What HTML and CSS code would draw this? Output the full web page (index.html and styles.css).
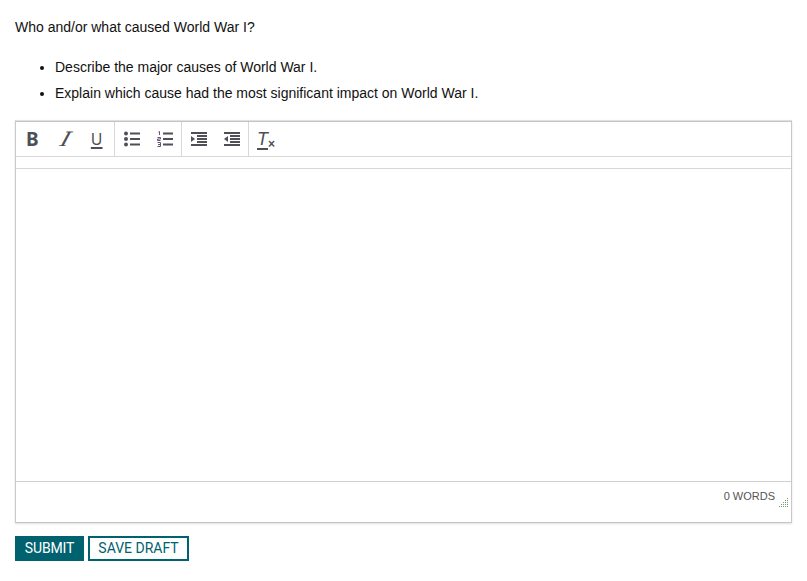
FILE: index.html
```html
<!DOCTYPE html>
<html lang="en">
<head>
<meta charset="utf-8">
<title>Essay question</title>
<link rel="stylesheet" href="styles.css">
</head>
<body>
<p class="question">Who and/or what caused World War I?</p>
<ul class="tasks">
  <li>Describe the major causes of World War I.</li>
  <li>Explain which cause had the most significant impact on World War I.</li>
</ul>
<div class="editor">
  <div class="toolbar">
    <div class="group group-text">
      <span class="tool bold">B</span>
      <span class="tool italic">I</span>
      <span class="tool"><span class="under">U</span></span>
    </div>
    <div class="group group-list">
      <span class="tool">
        <svg width="16" height="16" viewBox="0 0 16 16"><g fill="#4f4f57"><circle cx="2" cy="2.5" r="2"/><circle cx="2" cy="8" r="2"/><circle cx="2" cy="13.5" r="2"/><rect x="6" y="1.5" width="10" height="2"/><rect x="6" y="7" width="10" height="2"/><rect x="6" y="12.5" width="10" height="2"/></g></svg>
      </span>
      <span class="tool">
        <svg width="16" height="16" viewBox="0 0 16 16"><g fill="#4f4f57"><rect x="6" y="1.5" width="10" height="2"/><rect x="6" y="7" width="10" height="2"/><rect x="6" y="12.5" width="10" height="2"/></g><g fill="none" stroke="#6b4f78" stroke-width="1"><path d="M1.5 1l1-.5V4"/><path d="M.5 6.5h3v1.5h-3v1.5h3"/><path d="M.5 11.5h3v4h-3M1 13.5h2.5"/></g></svg>
      </span>
    </div>
    <div class="group group-indent">
      <span class="tool">
        <svg width="16" height="14" viewBox="0 0 16 14"><g fill="#4f4f57"><rect y="0" width="16" height="2"/><rect x="6" y="3" width="10" height="2"/><rect x="6" y="6" width="10" height="2"/><rect x="6" y="9" width="10" height="2"/><rect y="12" width="16" height="2"/><path d="M0 4l4 3-4 3z"/></g></svg>
      </span>
      <span class="tool">
        <svg width="16" height="14" viewBox="0 0 16 14"><g fill="#4f4f57"><rect y="0" width="16" height="2"/><rect x="6" y="3" width="10" height="2"/><rect x="6" y="6" width="10" height="2"/><rect x="6" y="9" width="10" height="2"/><rect y="12" width="16" height="2"/><path d="M4 4L0 7l4 3z"/></g></svg>
      </span>
    </div>
    <div class="group group-clear">
      <span class="tool clear"><span class="clear-t">T</span><span class="clear-x">×</span><span class="clear-line"></span></span>
    </div>
  </div>
  <div class="subbar"></div>
  <div class="content"></div>
  <div class="footer">
    <span class="count">0 WORDS</span>
    <svg class="grip" width="11" height="11" viewBox="0 0 11 11"><g fill="#6f9f6f"><rect x="9" y="1" width="1" height="1"/><rect x="7" y="3" width="1" height="1"/><rect x="9" y="3" width="1" height="1"/><rect x="5" y="5" width="1" height="1"/><rect x="7" y="5" width="1" height="1"/><rect x="9" y="5" width="1" height="1"/><rect x="3" y="7" width="1" height="1"/><rect x="5" y="7" width="1" height="1"/><rect x="7" y="7" width="1" height="1"/><rect x="9" y="7" width="1" height="1"/><rect x="1" y="9" width="1" height="1"/><rect x="3" y="9" width="1" height="1"/><rect x="5" y="9" width="1" height="1"/><rect x="7" y="9" width="1" height="1"/><rect x="9" y="9" width="1" height="1"/></g></svg>
  </div>
</div>
<div class="actions">
  <button class="btn primary" type="button">SUBMIT</button>
  <button class="btn secondary" type="button">SAVE DRAFT</button>
</div>
</body>
</html>
```
FILE: styles.css
```css
html, body { margin: 0; padding: 0; }
body {
  padding: 18px 15px 0;
  background: #fff;
  color: #111;
  font: 14px/18px "Liberation Sans", Arial, sans-serif;
}
.question { margin: 0 0 22px; }
.tasks { margin: 0 0 18px; padding: 0 0 0 40px; }
.tasks li { margin-bottom: 8px; }
.tasks li:last-child { margin-bottom: 0; }
.editor {
  width: 777px;
  height: 403px;
  box-sizing: border-box;
  border: 1px solid #c9c9c9;
  border-top-color: #e0e0e0;
  border-bottom-color: #c4c4c4;
  padding-top: 1px;
  box-shadow: inset 0 1px 0 #c4c4c4, 0 1px 2px rgba(0,0,0,.12);
  display: flex;
  flex-direction: column;
}
.toolbar {
  height: 35px;
  box-sizing: border-box;
  border-bottom: 1px solid #d8d8d8;
  display: flex;
  align-items: stretch;
}
.group {
  display: flex;
  align-items: center;
  border-right: 1px solid #d8d8d8;
  box-sizing: border-box;
}
.group-text { width: 99px; }
.group-list { width: 67px; }
.group-indent { width: 67px; }
.group-clear { width: 32px; border-right: 0; }
.tool {
  flex: 1;
  display: flex;
  justify-content: center;
  align-items: center;
  position: relative;
  color: #4f4f57;
}
.bold { font: 700 19px/20px "Noto Sans", sans-serif; }
.italic { font: italic 400 22px/20px "Liberation Serif", serif; transform: skewX(-18deg) scaleX(1.2); }
.under {
  margin-right: 2px;
  font: 16px/20px "Noto Sans", sans-serif;
  text-decoration: underline;
  text-decoration-thickness: 2px;
  text-underline-offset: 2px;
}
.clear { height: 22px; }
.clear-t { position: absolute; left: 8px; top: 1px; font: italic 400 18px/20px "Liberation Sans", sans-serif; }
.clear-x { position: absolute; left: 19px; top: 9px; font: 700 12px/14px "Liberation Sans", sans-serif; }
.clear-line { position: absolute; left: 8px; top: 20px; width: 11px; height: 2px; background: #4f4f57; }
.subbar { flex: none; height: 11px; border-bottom: 1px solid #d8d8d8; }
.content { flex: 1; }
.footer {
  height: 41px;
  border-top: 1px solid #cfcfcf;
  box-sizing: border-box;
  display: flex;
  justify-content: flex-end;
  position: relative;
}
.count {
  font-size: 11px;
  line-height: 14px;
  color: #555;
  margin: 7px 16px 0 0;
}
.grip { position: absolute; right: 2px; bottom: 14px; }
.actions { display: flex; gap: 4px; margin-top: 13px; }
.btn {
  height: 25px;
  box-sizing: border-box;
  padding: 0 0 1px;
  font: 14px/18px Roboto, sans-serif;
  border: 2px solid #00626e;
  border-radius: 0;
}
.primary { width: 69px; background: #00626e; color: #fff; letter-spacing: -.15px; }
.secondary { width: 101px; background: #fff; color: #00626e; }
```
